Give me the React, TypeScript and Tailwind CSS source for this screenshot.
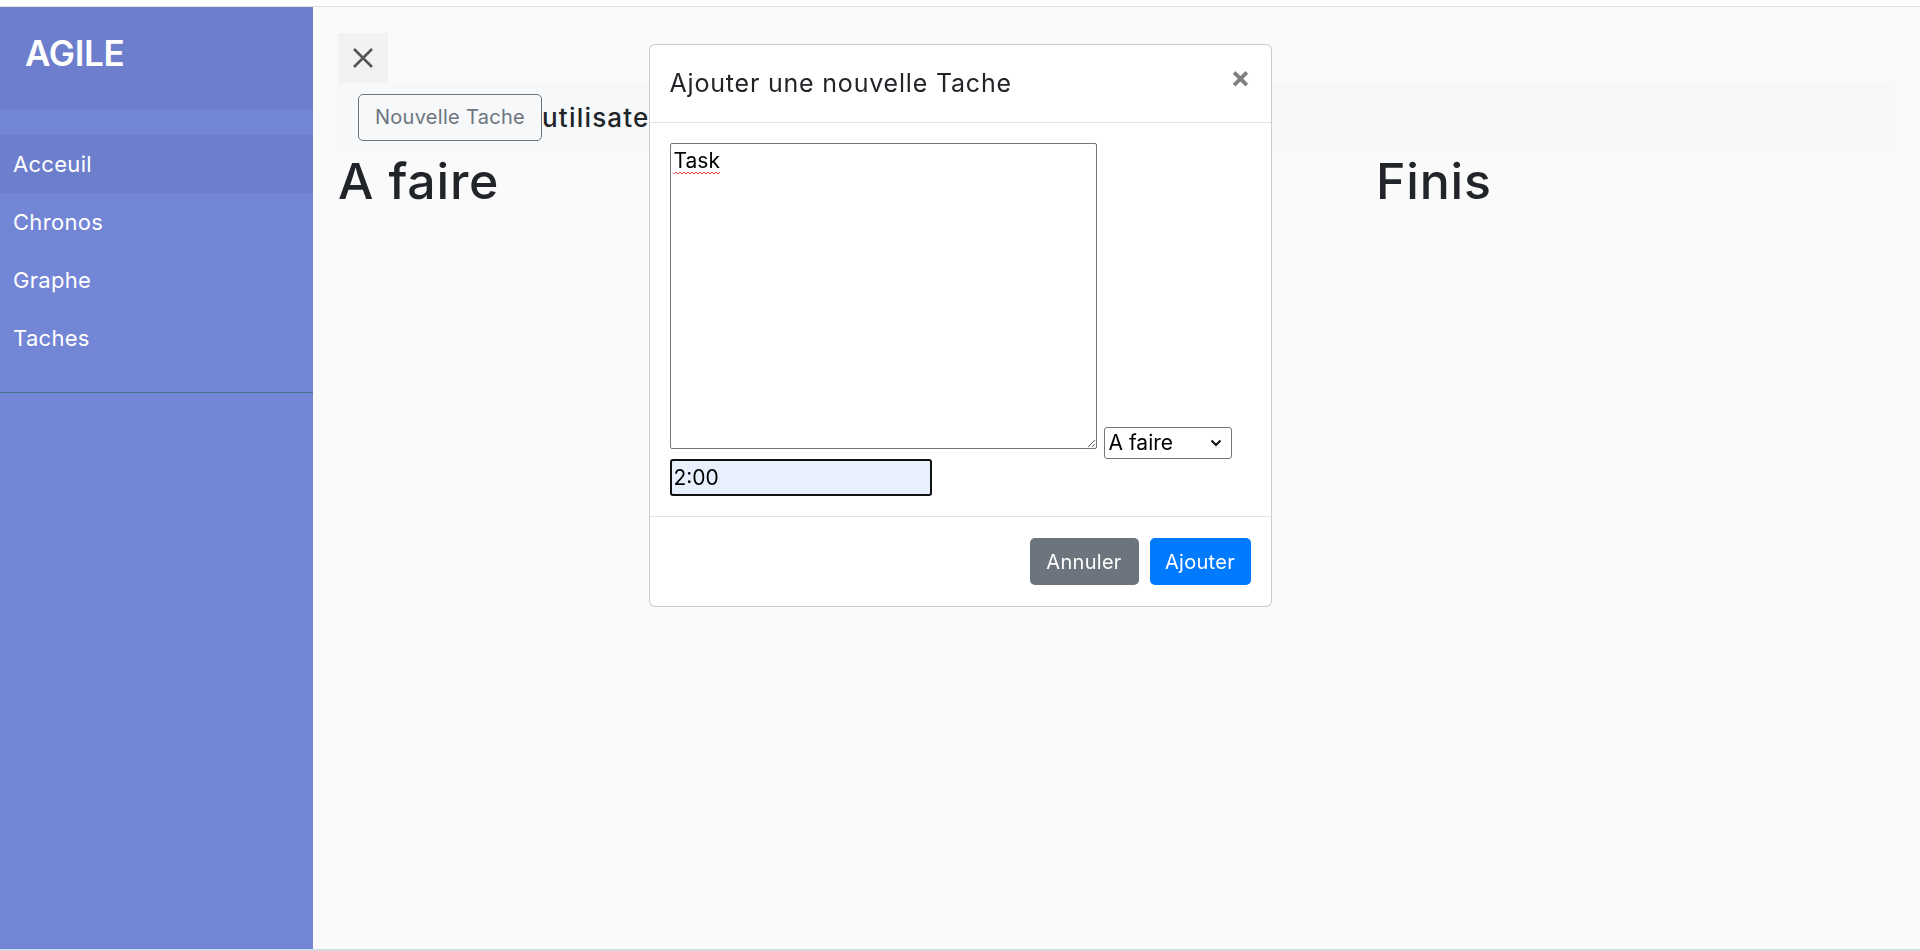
import { useState } from "react";

const navItems = ["Acceuil", "Chronos", "Graphe", "Taches"];

function Sidebar() {
  return (
    <aside className="w-[313px] shrink-0 bg-[#7386D5] text-white">
      <div className="h-[103px] bg-[#6d7fcc] p-[25px]">
        <h3 className="text-[35px] leading-[42px] font-semibold tracking-[-0.3px]">AGILE</h3>
      </div>
      <ul className="py-[25px] border-b border-[#47748b]">
        {navItems.map((item, i) => (
          <li key={item}>
            <a
              href="#"
              className={
                "block h-[58px] px-[13px] py-[12.5px] text-[22px] leading-[33px] tracking-[0.3px] " +
                (i === 0 ? "bg-[#6d7fcc]" : "")
              }
            >
              {item}
            </a>
          </li>
        ))}
      </ul>
    </aside>
  );
}

function AddTaskModal() {
  const [time, setTime] = useState("2:00");

  return (
    <div className="fixed inset-0 flex justify-center pt-[44px] pointer-events-none">
      <div className="pointer-events-auto w-[623px] h-[563px] bg-white border border-black/20 rounded-[6px] flex flex-col">
        {/* header */}
        <div className="h-[78px] shrink-0 flex items-center px-[20px] border-b border-[#dee2e6]">
          <h5 className="text-[25px] leading-[37.5px] font-normal text-[#212529] tracking-[0.8px]">
            Ajouter une nouvelle Tache
          </h5>
          <button className="ml-auto -mt-[14px] text-[30px] leading-none font-bold text-black/50">
            ×
          </button>
        </div>

        {/* body */}
        <div className="p-[20px] border-b border-[#dee2e6]">
          <div className="flex items-start gap-[7px]">
            <div className="relative">
              <textarea
                defaultValue="Task"
                spellCheck={false}
                className="block w-[427px] h-[306px] border border-[#767676] rounded-[2px] bg-white px-[3px] py-[2px] text-[21px] leading-[30px] text-black resize"
              />
              <svg
                className="absolute left-[4px] top-[28px]"
                width="46"
                height="4"
                viewBox="0 0 46 4"
              >
                <path
                  d="M0 3 L2 1 L4 3 L6 1 L8 3 L10 1 L12 3 L14 1 L16 3 L18 1 L20 3 L22 1 L24 3 L26 1 L28 3 L30 1 L32 3 L34 1 L36 3 L38 1 L40 3 L42 1 L44 3 L46 1"
                  fill="none"
                  stroke="#e03a3a"
                  strokeWidth="1"
                />
              </svg>
            </div>
            <div className="relative mt-[284px]">
              <select
                defaultValue="afaire"
                className="appearance-none block w-[128px] h-[32px] border border-[#767676] rounded-[3px] bg-white pl-[4px] text-[21px] leading-[30px] text-black"
              >
                <option value="afaire">A faire</option>
                <option value="encours">En cours</option>
                <option value="finis">Finis</option>
              </select>
              <svg
                className="absolute right-[10px] top-[12px] pointer-events-none"
                width="12"
                height="8"
                viewBox="0 0 12 8"
              >
                <path d="M1.5 1.5 L6 6 L10.5 1.5" fill="none" stroke="#111" strokeWidth="2" />
              </svg>
            </div>
          </div>
          <input
            value={time}
            onChange={(e) => setTime(e.target.value)}
            className="block w-[262px] h-[37px] border-2 border-[#111] rounded-[3px] bg-[#e8f0fe] px-[2px] text-[21px] text-black outline-none"
          />
        </div>

        {/* footer */}
        <div className="flex-1 flex items-center justify-end gap-[11px] pr-[20px]">
          <button className="w-[109px] h-[47px] rounded-[5px] bg-[#6c757d] text-white text-[20px] leading-[30px] tracking-[0.3px]">
            Annuler
          </button>
          <button className="w-[101px] h-[47px] rounded-[5px] bg-[#007bff] text-white text-[20px] leading-[30px] tracking-[0.3px]">
            Ajouter
          </button>
        </div>
      </div>
    </div>
  );
}

export default function App() {
  return (
    <div className="h-[951px] flex flex-col overflow-hidden font-['Inter','Noto_Sans',sans-serif]">
      <div className="h-[7px] shrink-0 bg-white border-b border-[#e2e2e2]" />
      <div className="flex-1 flex min-h-0">
        <Sidebar />
        <main className="flex-1 bg-[#fafafa] px-[25px] pt-[26px]">
          <button className="w-[50px] h-[50px] bg-[#f2f2f2] flex items-center justify-center">
            <svg width="22" height="22" viewBox="0 0 22 22">
              <path d="M2 2 L20 20 M20 2 L2 20" stroke="#555" strokeWidth="2.6" />
            </svg>
          </button>
          <nav className="h-[68px] bg-[#f7f8f9] flex items-center pl-[20px]">
            <button className="w-[184px] h-[47px] border border-[#6c757d] rounded-[5px] text-[#6c757d] text-[20px] tracking-[0.3px]">
              Nouvelle Tache
            </button>
            <span className="text-[26px] font-medium text-[#212529] tracking-[1.2px]">utilisateur</span>
          </nav>
          <div className="grid grid-cols-3">
            <h1 className="text-[50px] leading-[60px] font-medium text-[#212529] tracking-[0.8px]">A faire</h1>
            <h1 className="text-[50px] leading-[60px] font-medium text-[#212529] tracking-[0.8px]">En cours</h1>
            <h1 className="text-[50px] leading-[60px] font-medium text-[#212529] tracking-[0.8px]">Finis</h1>
          </div>
        </main>
      </div>
      <div className="h-[2px] shrink-0 bg-[#d3dbe2]" />
      <AddTaskModal />
    </div>
  );
}
